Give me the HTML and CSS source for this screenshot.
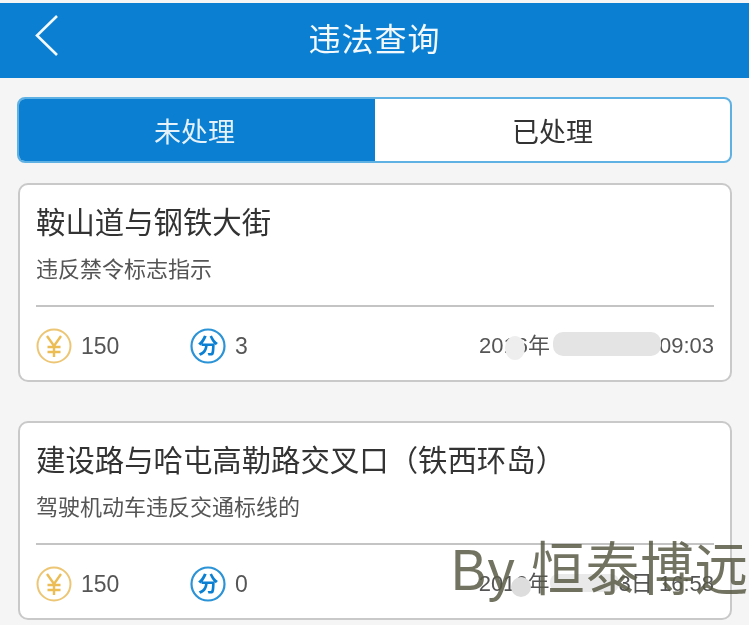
FILE: index.html
```html
<!DOCTYPE html>
<html lang="zh">

<head>
    <meta charset="UTF-8">
    <title>违法查询</title>
    <link rel="stylesheet" href="styles.css">
</head>

<body>
    <header class="topbar">
        <svg class="back" width="26" height="44" viewBox="0 0 26 44">
            <path d="M23 2 L3 21.500 L23 41" fill="none" stroke="#f4f9fd" stroke-width="2.600"/>
        </svg>
        <h1>违法查询</h1>
    </header>

    <div class="tabs">
        <div class="tab active">未处理</div>
        <div class="tab">已处理</div>
    </div>

    <div class="card">
        <h2>鞍山道与钢铁大街</h2>
        <p class="reason">违反禁令标志指示</p>
        <div class="meta">
            <span class="fee">
                <svg width="36" height="36" viewBox="0 0 36 36">
                    <circle cx="18" cy="18" r="16.500" fill="none" stroke="#ecc675" stroke-width="2"/>
                    <path d="M11 8 L18 18 L25 8 M18 18 V29 M11.500 19 H24.500 M11.500 24 H24.500" fill="none" stroke="#ecbc55" stroke-width="2.400"/>
                </svg>
                150
            </span>
            <span class="points">
                <svg width="36" height="36" viewBox="0 0 36 36">
                    <circle cx="18" cy="18" r="16.500" fill="none" stroke="#2b93d6" stroke-width="2.200"/>
                    <text x="18" y="25" text-anchor="middle" class="fen">分</text>
                </svg>
                3
            </span>
            <span class="date">2016年<span class="smudge smudge-wide"></span><span class="smudge smudge-dot"></span>09:03</span>
        </div>
    </div>

    <div class="card card-second">
        <h2>建设路与哈屯高勒路交叉口（铁西环岛）</h2>
        <p class="reason">驾驶机动车违反交通标线的</p>
        <div class="meta">
            <span class="fee">
                <svg width="36" height="36" viewBox="0 0 36 36">
                    <circle cx="18" cy="18" r="16.500" fill="none" stroke="#ecc675" stroke-width="2"/>
                    <path d="M11 8 L18 18 L25 8 M18 18 V29 M11.500 19 H24.500 M11.500 24 H24.500" fill="none" stroke="#ecbc55" stroke-width="2.400"/>
                </svg>
                150
            </span>
            <span class="points">
                <svg width="36" height="36" viewBox="0 0 36 36">
                    <circle cx="18" cy="18" r="16.500" fill="none" stroke="#2b93d6" stroke-width="2.200"/>
                    <text x="18" y="25" text-anchor="middle" class="fen">分</text>
                </svg>
                0
            </span>
            <span class="date">2016年<span class="smudge smudge-low"></span><span class="smudge smudge-dot2"></span>3日 16:58</span>
        </div>
    </div>

    <div class="watermark">By 恒泰博远</div>
</body>
</html>
```

FILE: styles.css
```css
html, body {
    height: 100%;
    margin: 0;
    padding: 0;
}

body {
    position: relative;
    overflow: hidden;
    padding-top: 3px;
    box-sizing: border-box;
    background-color: #f5f5f5;
    color: #333;
    font-family: "Noto Sans CJK SC", "Liberation Sans", sans-serif;
}

/* La captura original está algo borrosa */
.topbar h1, .back, .tab, .card h2, .reason, .meta {
    filter: blur(0.4px);
}

/* Barra superior */
.topbar {
    position: relative;
    display: flex;
    justify-content: center;
    align-items: center;
    height: 75px;
    background-color: #0b80d3;
}

.topbar h1 {
    margin: 0 0 8px 0;
    color: #f4f9fd;
    font-size: 32px;
    font-weight: 400;
    letter-spacing: 1px;
}

.back {
    position: absolute;
    left: 34px;
    top: 11px;
}

/* Pestañas */
.tabs {
    display: flex;
    height: 66px;
    margin: 19px 17px 20px 17px;
    box-sizing: border-box;
    border: 2px solid #5fb1e4;
    border-radius: 8px;
    overflow: hidden;
    background-color: #fff;
}

.tab {
    flex: 1;
    display: flex;
    justify-content: center;
    align-items: center;
    font-size: 27px;
    color: #333;
}

.tab.active {
    margin: -2px 0 -2px -2px;
    padding-right: 3px;
    background-color: #0b80d3;
    color: #e6f2fb;
}

/* Tarjetas */
.card {
    height: 199px;
    margin: 0 17px 39px 18px;
    padding: 0 16px;
    box-sizing: border-box;
    border: 2px solid #c9c9c9;
    border-radius: 10px;
    background-color: #fff;
}

.card-second {
    margin-bottom: 0;
}

.card h2 {
    margin: 14px 0 0 0;
    font-size: 29.400px;
    line-height: 42px;
    font-weight: 400;
    color: #333;
    white-space: nowrap;
}

.reason {
    margin: 10px 0 0 0;
    font-size: 22px;
    line-height: 32px;
    color: #555;
}

.meta {
    display: flex;
    align-items: center;
    height: 74px;
    margin-top: 22px;
    padding-top: 6px;
    box-sizing: border-box;
    border-top: 2px solid #c4c4c4;
    font-family: "Liberation Sans", "Noto Sans CJK SC", sans-serif;
    font-size: 23px;
    color: #555;
}

.meta svg {
    flex: none;
}

.fee, .points {
    display: flex;
    align-items: center;
    gap: 9px;
}

.fee {
    width: 154px;
}

.fen {
    font-family: "Noto Sans CJK SC", sans-serif;
    font-size: 21px;
    font-weight: 700;
    fill: #0b80d3;
}

.date {
    position: relative;
    margin-left: auto;
    font-size: 22px;
    line-height: 30px;
    white-space: nowrap;
}

/* Zonas borradas de la captura */
.smudge {
    display: inline-block;
    position: relative;
    background-color: #e4e4e4;
}

.smudge-wide {
    width: 108px;
    height: 24px;
    margin: 0 -2px 0 3px;
    border-radius: 10px;
    vertical-align: -3px;
}

.smudge-dot {
    position: absolute;
    left: 26px;
    top: 5px;
    width: 20px;
    height: 24px;
    border-radius: 50%;
    background-color: #eee;
}

.smudge-low {
    width: 69px;
    height: 18px;
    border-radius: 8px;
    vertical-align: -1px;
    background-color: #e9e9e9;
}

.smudge-dot2 {
    position: absolute;
    left: 32px;
    top: 8px;
    width: 20px;
    height: 20px;
    border-radius: 50%;
    background-color: #ddd;
}

/* Marca de agua */
.watermark {
    position: absolute;
    left: 451px;
    top: 533px;
    color: rgba(90, 90, 70, 0.85);
    font-size: 53.500px;
    line-height: 76px;
    letter-spacing: 1px;
    font-family: "Liberation Sans", "Noto Sans CJK SC", sans-serif;
    white-space: nowrap;
    transform: scaleY(1.08);
}
```
